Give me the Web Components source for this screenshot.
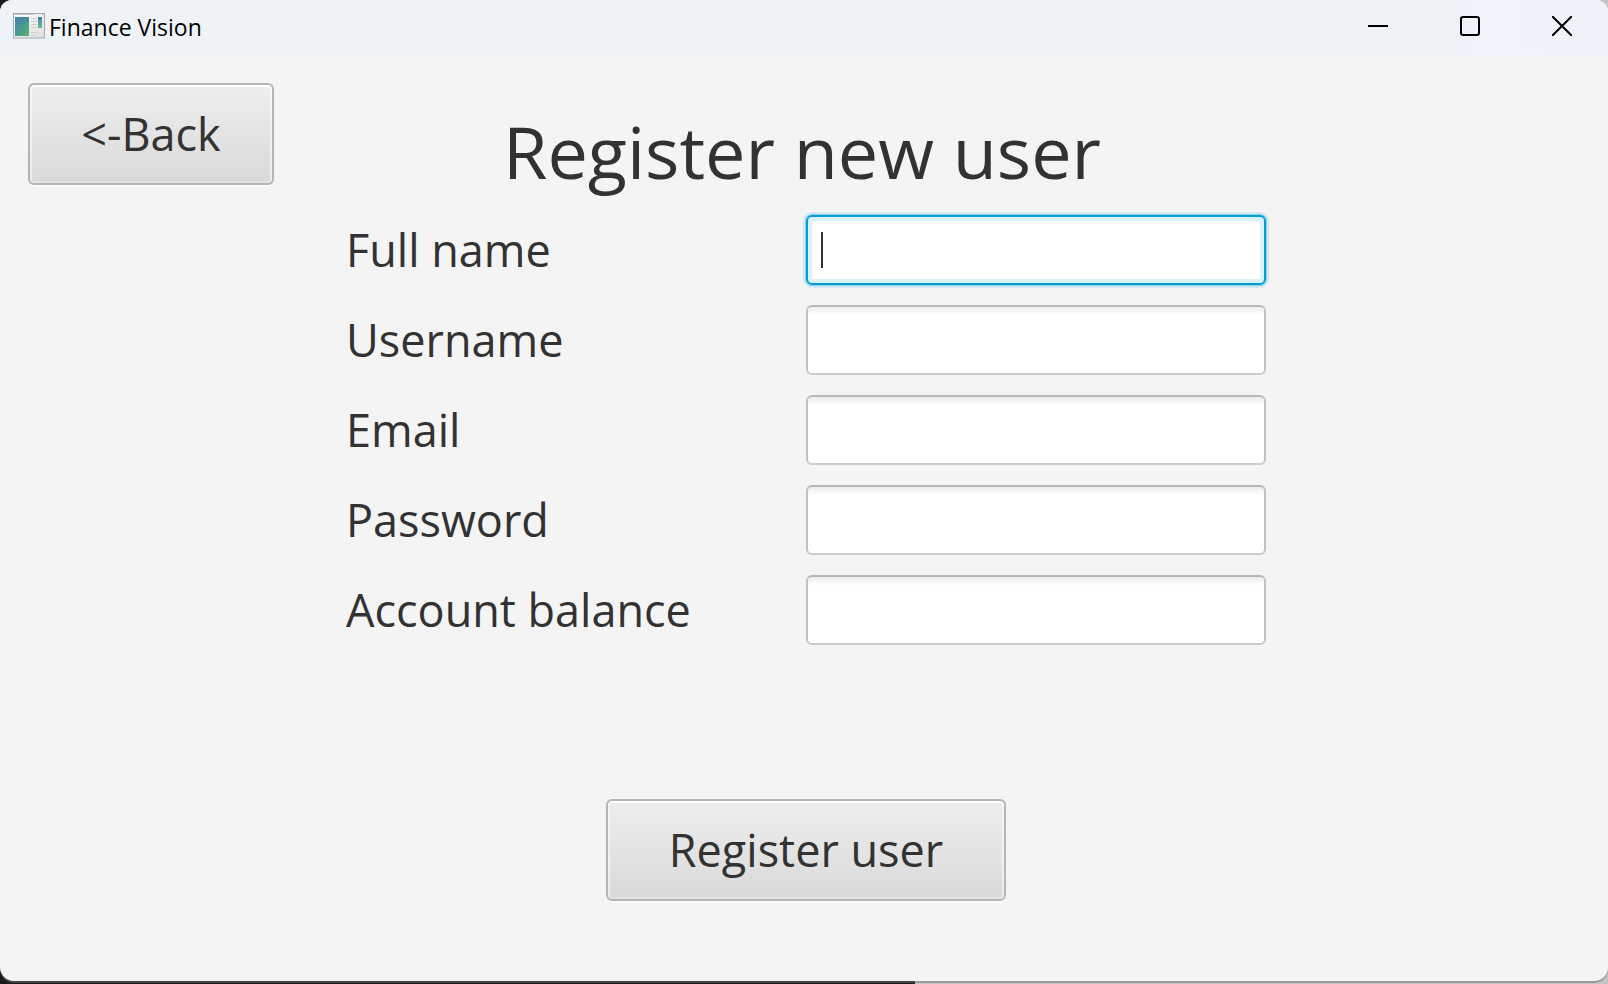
<!DOCTYPE html>
<html lang="en">
<head>
<meta charset="utf-8">
<title>Finance Vision</title>
<style>
  html, body { margin: 0; height: 100%; }
  body {
    --ink: #323232;
    --surface: #f4f4f4;
    font-family: "Open Sans", "Noto Sans", sans-serif;
    color: var(--ink);
  }
</style>
</head>
<body>
<finance-app></finance-app>

<script>
const define = (name, html, setup) => {
  const template = document.createElement('template');
  template.innerHTML = html;
  customElements.define(name, class extends HTMLElement {
    constructor() {
      super();
      this.attachShadow({ mode: 'open' }).append(template.content.cloneNode(true));
    }
    connectedCallback() { if (setup) setup(this, this.shadowRoot); }
  });
};

define('app-icon', `
  <style>:host { display: block; width: 32px; height: 26px; } svg { display: block; }</style>
  <svg width="32" height="26" viewBox="0 0 32 26" aria-hidden="true">
    <defs>
      <linearGradient id="pane" x1="0" y1="0" x2="1" y2="1">
        <stop offset="0" stop-color="#4a86ad"/><stop offset=".5" stop-color="#459a90"/><stop offset="1" stop-color="#5fb56c"/>
      </linearGradient>
      <linearGradient id="side" x1="0" y1="0" x2="0" y2="1">
        <stop offset="0" stop-color="#3d7fb0"/><stop offset="1" stop-color="#6fbd86"/>
      </linearGradient>
      <linearGradient id="body" x1="0" y1="0" x2="1" y2="1">
        <stop offset="0" stop-color="#ffffff"/><stop offset="1" stop-color="#dedede"/>
      </linearGradient>
    </defs>
    <rect x=".5" y=".5" width="31" height="24.5" fill="url(#body)" stroke="#a3a9b1"/>
    <rect x="1" y="1" width="30" height="1" fill="#c5ccd4"/>
    <rect x="21" y="1" width="8" height="1" fill="#eef1f4"/>
    <rect x="2" y="4" width="14" height="19" fill="url(#pane)"/>
    <path d="M2 14Q6 9 16 9V4H2Z" fill="#4b7fae" opacity=".45"/>
    <path d="M18 5.500h6M18 8.500h6M18 11.500h6M18 14.500h6M18 19.500h6M18 22.500h5" stroke="#cfcfcf"/>
    <rect x="25" y="4" width="4" height="11" fill="url(#side)"/>
  </svg>`);

define('title-bar', `
  <style>
    :host {
      display: flex; align-items: stretch; height: 55px; color: #000;
      background: linear-gradient(90deg, #eef3f8 0 90%, #eff3fa 92%, #eff2fb);
    }
    .name { flex: 1; display: flex; align-items: center; gap: 4px; padding: 0 0 3px 13px; }
    h1 { margin: 0; padding-top: 1px; font-size: 23px; line-height: 28px; font-weight: 400; }
    button { width: 92px; padding: 0 0 3px; border: 0; background: none; color: inherit; }
    svg { display: block; margin: auto; fill: none; stroke: currentColor; stroke-width: 2; }
  </style>
  <div class="name"><app-icon></app-icon><h1><slot></slot></h1></div>
  <button aria-label="Minimize"><svg width="20" height="20"><path d="M0 10H20"/></svg></button>
  <button aria-label="Maximize"><svg width="20" height="20"><rect x="1" y="1" width="18" height="18" rx="2"/></svg></button>
  <button aria-label="Close"><svg width="20" height="20"><path d="M0 0L20 20M20 0L0 20"/></svg></button>`);

define('push-button', `
  <style>
    :host { display: block; }
    button {
      display: block; width: 100%; height: 102px; padding: 0;
      font: inherit; font-size: 45px; line-height: 64px; color: inherit;
      border: 2px solid #b5b5b5; border-radius: 6px;
      background: linear-gradient(#eeeeee, #d9d9d9);
      box-shadow: inset 0 2px #fff, inset 2px 0 #ffffff80, inset -2px 0 #ffffff80, inset 0 -2px #ffffff30, 0 2px #fafafa;
    }
  </style>
  <button type="button"><slot></slot></button>`);

define('form-field', `
  <style>
    :host { display: grid; grid-template-columns: 1fr 1fr; align-items: center; }
    label { font-size: 45px; line-height: 70px; }
    .box { position: relative; display: block; }
    input {
      display: block; box-sizing: border-box; width: 100%; height: 70px; padding: 0 14px;
      font: inherit; font-size: 28px; color: inherit; outline: 0;
      border: 2px solid; border-color: #b8b8b8 #c2c2c2 #cccccc; border-radius: 6px;
      background: linear-gradient(#ebebeb, #fff 8px);
    }
    :host([active]) input {
      border-color: #039ed3; caret-color: transparent;
      background: linear-gradient(#f7f7f7, #fff 8px);
      box-shadow: inset 0 0 0 4px #dbf2fa, 0 0 0 1px #8fd0e8, 0 0 0 3px #d3eaf2;
    }
    :host([active]) .box::after {
      content: ""; position: absolute; left: 15px; top: 17px; width: 2px; height: 36px; background: var(--ink);
    }
  </style>
  <label for="field"></label>
  <span class="box"><input id="field"></span>`,
  (host, root) => {
    root.querySelector('label').textContent = host.getAttribute('label');
    const input = root.querySelector('input');
    input.type = host.getAttribute('type') || 'text';
    if (host.hasAttribute('active')) input.focus();
  });

define('register-view', `
  <style>
    :host { display: block; padding: 28px 24px 0 28px; }
    header { display: grid; grid-template-columns: 246px 1fr 254px; align-items: start; }
    h2 { margin: 0; padding-top: 18px; font-size: 72px; line-height: 100px; font-weight: 400; text-align: center; }
    form { display: grid; gap: 20px; width: 100%; max-width: 920px; margin: 14px auto 0; }
    .submit { width: 400px; margin: 134px auto 0; }
  </style>
  <header><push-button>&lt;-Back</push-button><h2>Register new user</h2></header>
  <form>
    <form-field label="Full name" active></form-field>
    <form-field label="Username"></form-field>
    <form-field label="Email" type="email"></form-field>
    <form-field label="Password" type="password"></form-field>
    <form-field label="Account balance"></form-field>
    <push-button class="submit">Register user</push-button>
  </form>`);

define('finance-app', `
  <style>
    :host {
      display: flex; flex-direction: column; box-sizing: border-box; min-height: 100vh; padding-bottom: 3px;
      background: linear-gradient(90deg, #1c1a1b 56.9%, #c4c4c4 56.9%);
    }
    .window {
      flex: 1; display: flex; flex-direction: column; overflow: hidden;
      background: var(--surface); border-radius: 12px 12px 14px 14px; box-shadow: 0 2px #70707080;
    }
    register-view { flex: 1; }
  </style>
  <div class="window">
    <title-bar>Finance Vision</title-bar>
    <register-view></register-view>
  </div>`);
</script>
</body>
</html>
